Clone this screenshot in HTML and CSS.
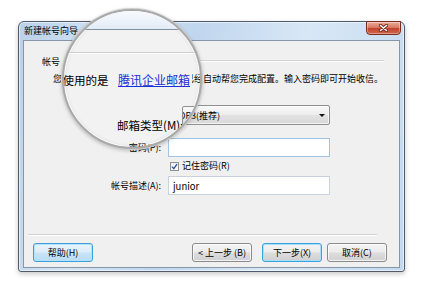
FILE: index.html
```html
<!DOCTYPE html>
<html lang="zh-CN">
<head>
<meta charset="utf-8">
<title>新建帐号向导</title>
<link rel="stylesheet" href="styles.css">
</head>
<body>
<div class="stage">
  <div class="window">
    <div class="titlebar">
      <span class="title">新建帐号向导</span>
      <button class="close" aria-label="关闭">
        <svg width="11" height="8" viewBox="0 0 11 8"><path d="M2.5 1.5 L8.5 6.5 M8.5 1.5 L2.5 6.5" stroke="#6b2418" stroke-width="3.2" stroke-linecap="round"/><path d="M2.5 1.5 L8.5 6.5 M8.5 1.5 L2.5 6.5" stroke="#ffffff" stroke-width="1.6" stroke-linecap="round"/></svg>
      </button>
    </div>
    <div class="client">
      <div class="group"><span class="group-label">帐号</span><span class="rule"></span></div>
      <p class="intro"><span class="lead">您使用的是 <a class="link">腾讯企业邮箱</a>，</span><span class="tail">已经自动帮您完成配置。输入密码即可开始收信。</span></p>
      <div class="form">
        <div class="row row-select">
          <span class="label">邮箱类型(M):</span>
          <div class="select"><span class="select-text">POP3(推荐)</span><span class="arrow"></span></div>
        </div>
        <div class="row row-pass">
          <span class="label">密码(P):</span>
          <div class="input input-focus"></div>
        </div>
        <div class="row row-check">
          <span></span>
          <label class="check"><span class="box"><svg width="7" height="7" viewBox="0 0 7 7"><path d="M1 3.6 L2.8 5.6 L6 1.2" fill="none" stroke="#2b4f9a" stroke-width="1.3"/></svg></span>记住密码(R)</label>
        </div>
        <div class="row row-desc">
          <span class="label">帐号描述(A):</span>
          <div class="input"><span class="value">junior</span></div>
        </div>
      </div>
      <div class="sep"></div>
      <div class="buttons">
        <button class="btn btn-default">帮助(H)</button>
        <button class="btn btn-back">&lt; 上一步 (B)</button>
        <button class="btn btn-next btn-focus">下一步(X)</button>
        <button class="btn btn-cancel">取消(C)</button>
      </div>
    </div>
  </div>

  <div class="lens">
    <div class="l-title"></div>
    <div class="l-rule"></div>
    <span class="l-text">您使用的是</span>
    <span class="l-link">腾讯企业邮箱</span>
    <div class="l-tail"><span class="l-tail-text">已经自动</span></div>
    <span class="l-label">邮箱类型(M):</span>
    <div class="l-select"><span class="l-select-text">POP3(推荐)</span></div>
    <span class="l-pass">密码(P):</span>
  </div>
</div>
</body>
</html>
```

FILE: styles.css
```css
* { box-sizing: border-box; }
body {
  margin: 0;
  background: #ffffff;
  font-family: "Noto Sans CJK SC", "Noto Sans", sans-serif;
  font-size: 9px;
  color: #000;
}
.stage {
  position: relative;
  width: 424px;
  height: 295px;
  padding: 21px 0 0 18px;
}
.window {
  width: 387px;
  height: 251px;
  border: 1px solid #4f5b6a;
  border-radius: 6px 6px 3px 3px;
  background: linear-gradient(100deg, #bad1ea 0%, #d4e4f5 22%, #c0d6ee 42%, #d8e7f6 68%, #c4d9ef 100%);
  display: flex;
  flex-direction: column;
  box-shadow: 0 2px 5px rgba(0,0,0,.22), inset 0 0 0 1px rgba(255,255,255,.55);
}
.titlebar {
  height: 18px;
  display: flex;
  align-items: center;
  padding-left: 5px;
}
.title { flex: 1; line-height: 12px; }
.close {
  width: 35px;
  height: 14px;
  margin: -1px 3px 0 0;
  align-self: flex-start;
  padding: 0;
  border: 1px solid #7a2c20;
  border-radius: 0 0 4px 4px;
  background: linear-gradient(#e9ad9c 0%, #d9765f 48%, #c2432c 52%, #d0664c 100%);
  display: flex;
  align-items: center;
  justify-content: center;
  box-shadow: inset 0 0 0 1px rgba(255,255,255,.35);
}
.client {
  flex: 1;
  margin: 0 4px 3px 4px;
  background: #f0f0f0;
  border: 1px solid #8796a7;
  display: flex;
  flex-direction: column;
}
.group {
  display: flex;
  align-items: flex-start;
  gap: 3px;
  height: 12px;
  margin: 15px 15px 0 18px;
  line-height: 12px;
}
.rule {
  flex: 1;
  margin-top: 4px;
  border-top: 1px solid #d3d3d3;
  border-bottom: 1px solid #ffffff;
}
.intro {
  display: flex;
  height: 12px;
  line-height: 12px;
  margin: 5px 16px 0 29px;
  white-space: nowrap;
}
.tail { margin-left: auto; }
.link { color: #1b2fd6; text-decoration: underline; }
.form { margin-top: 20px; }
.row {
  display: grid;
  grid-template-columns: 137px 162px;
  column-gap: 7px;
  align-items: center;
}
.row-select { height: 20px; }
.row-pass { height: 19px; margin-top: 13px; }
.row-check { height: 12px; margin-top: 3px; }
.row-desc { height: 19px; margin-top: 4px; }
.label { text-align: right; line-height: 12px; }
.select {
  height: 20px;
  border: 1px solid #8f9090;
  border-radius: 2px;
  background: linear-gradient(#fafafa, #ececec 50%, #e2e2e2 51%, #d8d8d8);
  display: flex;
  align-items: center;
  padding: 0 4px 0 4px;
  box-shadow: inset 0 0 0 1px rgba(255,255,255,.7);
}
.arrow {
  margin-left: auto;
  width: 0;
  height: 0;
  border-left: 3px solid transparent;
  border-right: 3px solid transparent;
  border-top: 3px solid #111;
}
.input {
  height: 19px;
  background: #ffffff;
  border: 1px solid #c9d3dd;
  display: flex;
  align-items: center;
  padding-left: 4px;
}
.input-focus { border-color: #9ec3e6; }
.value { font-size: 9.5px; }
.check {
  display: flex;
  align-items: center;
  gap: 3px;
  padding-left: 2px;
  line-height: 12px;
}
.box {
  width: 9px;
  height: 9px;
  border: 1px solid #8e8f8f;
  background: linear-gradient(#eeeeee, #ffffff);
  display: flex;
  align-items: center;
  justify-content: center;
}
.sep {
  margin: 39px 22px 0 4px;
  border-top: 1px solid #d2d2d2;
  border-bottom: 1px solid #ffffff;
}
.buttons {
  display: flex;
  margin-top: 7px;
  padding: 0 12px 0 9px;
}
.btn {
  width: 60px;
  height: 19px;
  padding: 0;
  font: inherit;
  color: #000;
  border: 1px solid #8a8a8a;
  border-radius: 3px;
  background: linear-gradient(#f4f4f4, #ebebeb 48%, #dddddd 52%, #d0d0d0);
  box-shadow: inset 0 0 0 1px rgba(255,255,255,.75);
}
.btn-default {
  border-color: #3c9fdb;
  background: linear-gradient(#e8f4fc, #dcedf9 48%, #c8e4f7 52%, #b9dcf4);
  box-shadow: inset 0 0 0 1px #b5e2fa;
}
.btn-back { margin-left: auto; }
.btn-next { margin-left: 10px; }
.btn-cancel { margin-left: 5px; }
.btn-focus {
  border-color: #3ca2dc;
  box-shadow: inset 0 0 0 1px #a8def9;
}

/* magnifier lens over the dialog */
.lens {
  position: absolute;
  left: 62px;
  top: 9px;
  width: 140px;
  height: 140px;
  border: 2px solid #a9a9a9;
  border-radius: 50%;
  overflow: hidden;
  background: #f2f2f2;
  box-shadow: 0 0 0 1px #cfcfcf, 0 1px 4px rgba(0,0,0,.3), inset 0 0 0 1px rgba(255,255,255,.9), inset 0 0 4px rgba(0,0,0,.12);
}
.l-title {
  position: absolute;
  left: 0;
  right: 0;
  top: 0;
  height: 19px;
  background: linear-gradient(#f7fafd, #e2ecf7);
  border-bottom: 1px solid #7f90a3;
}
.l-rule {
  position: absolute;
  left: 0;
  right: 0;
  top: 41px;
  border-top: 1px solid #cdcdcd;
  border-bottom: 1px solid #ffffff;
}
.l-text, .l-link, .l-label {
  position: absolute;
  white-space: nowrap;
  line-height: 14px;
}
.l-text { left: -13px; top: 62px; font-size: 11.5px; }
.l-link { left: 54px; top: 62px; font-size: 12px; color: #1b2fd6; text-decoration: underline; }
.l-tail {
  position: absolute;
  left: 128px;
  top: 62px;
  width: 20px;
  height: 12px;
  overflow: hidden;
}
.l-tail-text {
  position: absolute;
  left: -7px;
  top: 0;
  line-height: 12px;
  white-space: nowrap;
}
.l-label { left: 53px; top: 107px; font-size: 11.5px; }
.l-select {
  position: absolute;
  left: 118px;
  top: 95px;
  width: 160px;
  height: 20px;
  border: 1px solid #8f9090;
  border-radius: 2px;
  background: linear-gradient(#fafafa, #ececec 50%, #e2e2e2 51%, #d8d8d8);
  overflow: hidden;
}
.l-select-text {
  position: absolute;
  left: -10px;
  top: 0;
  line-height: 18px;
  white-space: nowrap;
}
.l-pass {
  position: absolute;
  left: -40px;
  top: 127px;
  width: 137px;
  height: 19px;
  line-height: 19px;
  text-align: right;
}
```
